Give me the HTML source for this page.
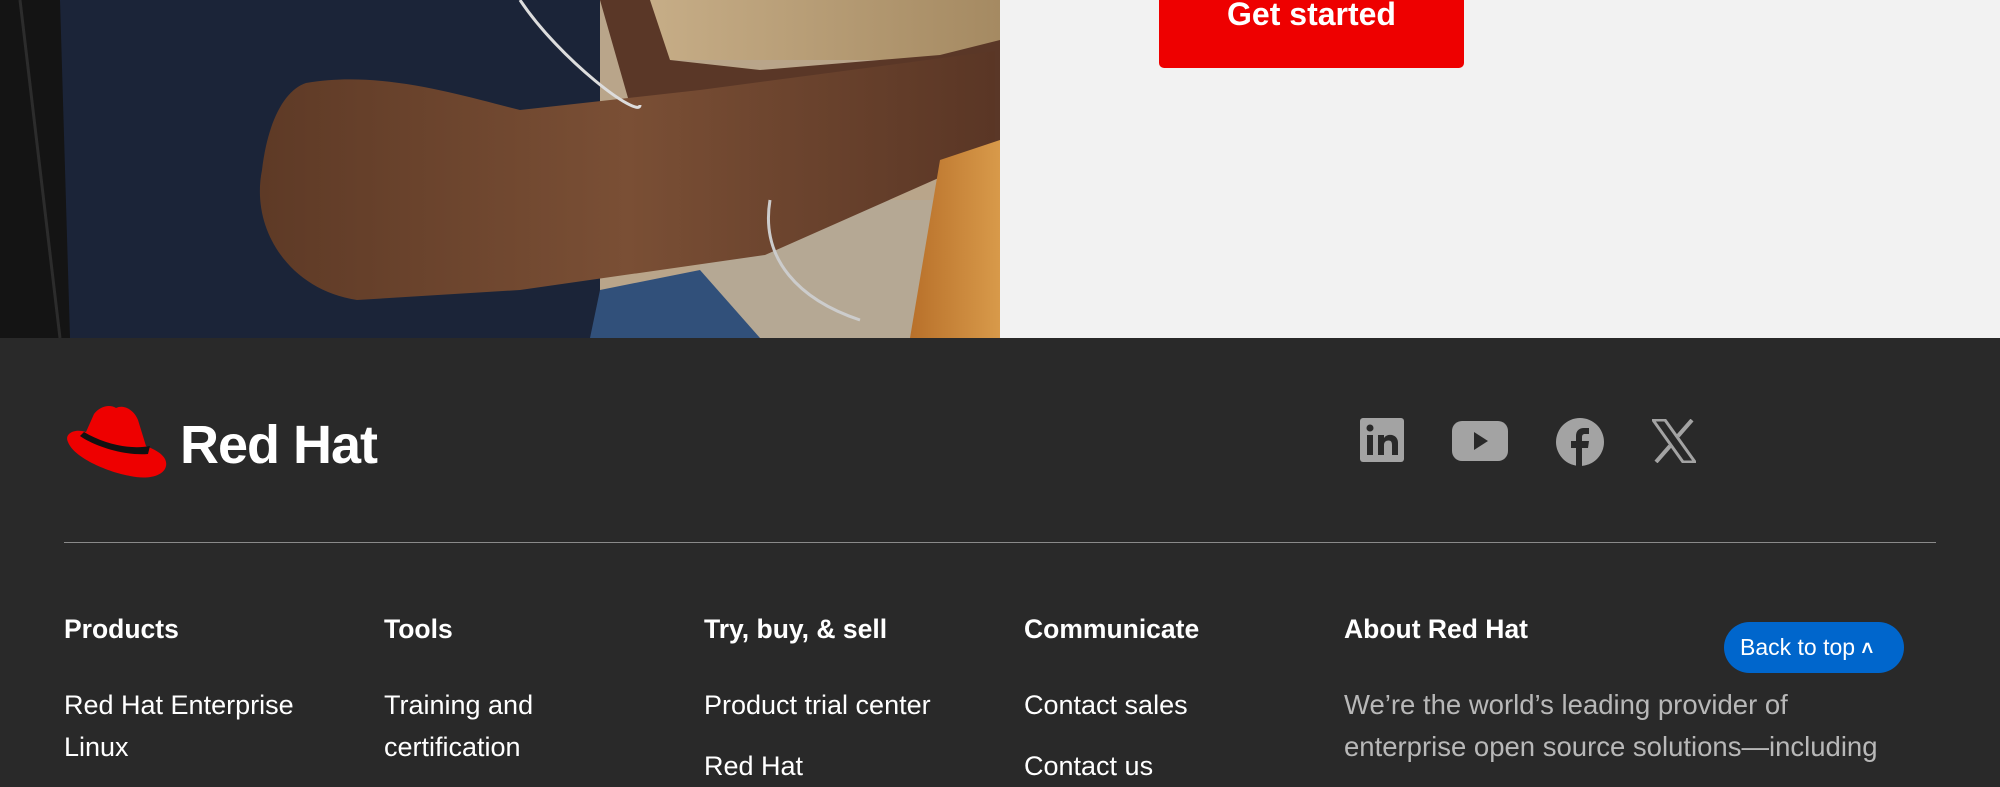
<!DOCTYPE html>
<html><head><meta charset="utf-8"><style>
*{margin:0;padding:0;box-sizing:border-box}
body{width:2000px;height:770px;overflow:hidden;background:#292929;font-family:"Liberation Sans",sans-serif;position:relative}
.top{position:absolute;left:0;top:0;width:2000px;height:338px;background:#f2f2f2}
.btn{position:absolute;left:1159px;top:-10px;width:305px;height:78px;background:#ee0000;border-radius:5px;color:#fff;font-weight:bold;font-size:32px;text-align:center;line-height:48px}
.col{position:absolute;top:612px;color:#fff}
.col h4{font-size:26.5px;font-weight:bold;line-height:34px;margin-bottom:38px}
.col p{font-size:27px;line-height:42px;color:#fff}
.about p{color:#b8b8b8;font-size:27.5px}
.btt{position:absolute;left:1724px;top:622px;width:180px;height:51px;background:#0066cc;border-radius:26px;color:#fff;font-size:23px;line-height:51px;padding-left:16px}
</style></head><body>
<div class="top">
<svg width="1000" height="338" style="position:absolute;left:0;top:0" viewBox="0 0 1000 338">
<defs>
<linearGradient id="bg" x1="0" x2="1"><stop offset="0" stop-color="#c9b08a"/><stop offset="1" stop-color="#a58a62"/></linearGradient>
<linearGradient id="arm" x1="0" y1="0" x2="1" y2="0"><stop offset="0" stop-color="#5e3a26"/><stop offset=".5" stop-color="#7a4f35"/><stop offset="1" stop-color="#5a3625"/></linearGradient>
<linearGradient id="wood" x1="0" x2="1"><stop offset="0" stop-color="#b8702a"/><stop offset="1" stop-color="#d89a4a"/></linearGradient>
</defs>
<rect width="1000" height="338" fill="#1b2438"/>
<rect x="600" y="0" width="400" height="338" fill="#b9a58a"/>
<rect x="620" y="0" width="380" height="60" fill="url(#bg)"/>
<rect x="700" y="200" width="240" height="138" fill="#b5a894"/>
<path d="M0 0H60L70 338H0Z" fill="#141414"/>
<path d="M20 0L60 338" stroke="#2c2c2c" stroke-width="3"/>
<path d="M600 0H650L670 60L760 70L940 55L1000 40V200L960 180L800 160L700 160L640 140Z" fill="#5a3727"/>
<path d="M306 83C380 70 460 95 520 110L700 90L995 51V153L765 255L520 290L357 300C290 290 250 230 262 170C268 120 285 90 306 83Z" fill="url(#arm)"/>
<path d="M600 290L700 270L760 338H590Z" fill="#31507a"/>
<path d="M940 160L1000 140V338H910Z" fill="url(#wood)"/>
<path d="M520 0C560 60 640 120 640 105" stroke="#ddd" stroke-width="3" fill="none"/>
<path d="M770 200C760 260 800 300 860 320" stroke="#ccc" stroke-width="3" fill="none"/>
</svg>
<div class="btn">Get started</div>
</div>
<svg style="position:absolute;left:64px;top:402px" width="104" height="78" viewBox="0 0 104 78">
<path d="M30 12C36 4 46 2 52 6C60 2 70 8 74 18L82 44C92 48 104 54 102 64C100 74 84 78 66 74C44 70 10 56 4 40C0 32 10 26 22 30Z" fill="#ee0000"/>
<path d="M16 34C30 44 60 54 84 52L86 44C66 48 40 42 20 30Z" fill="#111"/>
</svg>
<div style="position:absolute;left:180px;top:414px;font-size:54px;font-weight:bold;color:#fff;letter-spacing:-1px">Red Hat</div>
<svg style="position:absolute;left:1360px;top:418px" width="46" height="46" viewBox="0 0 46 46"><rect width="44" height="44" rx="3" fill="#a3a3a3"/><rect x="7" y="17" width="6" height="20" fill="#292929"/><circle cx="10" cy="10" r="3.5" fill="#292929"/><path d="M18 17H24V20C26 17 29 16.5 32 17C36 18 38 21 38 25V37H32V27C32 24 31 22.5 28.5 22.5C26 22.5 24 24 24 27V37H18Z" fill="#292929"/></svg>
<svg style="position:absolute;left:1452px;top:421px" width="56" height="40" viewBox="0 0 56 40"><rect width="56" height="40" rx="10" fill="#a3a3a3"/><path d="M22 11L36 20L22 29Z" fill="#292929"/></svg>
<svg style="position:absolute;left:1556px;top:418px" width="48" height="48" viewBox="0 0 48 48"><circle cx="24" cy="24" r="24" fill="#a3a3a3"/><path d="M26 48V30H32L33 23H26V19C26 17 27 16 29 16H33V10H28C23 10 20 13 20 18V23H15V30H20V48Z" fill="#292929"/></svg>
<svg style="position:absolute;left:1652px;top:419px" width="44" height="44" viewBox="0 0 44 44"><path d="M1 1H13L43 43H31Z" fill="none" stroke="#a3a3a3" stroke-width="3"/><path d="M40 1L26 17M4 43L18 27" stroke="#a3a3a3" stroke-width="4"/></svg>
<div style="position:absolute;left:64px;top:542px;width:1872px;height:1px;background:#8a8a8a"></div>
<div class="col" style="left:64px"><h4>Products</h4><p>Red Hat Enterprise<br>Linux</p></div>
<div class="col" style="left:384px"><h4>Tools</h4><p>Training and<br>certification</p></div>
<div class="col" style="left:704px"><h4>Try, buy, &amp; sell</h4><p>Product trial center</p><p style="margin-top:19px">Red Hat</p></div>
<div class="col" style="left:1024px"><h4>Communicate</h4><p>Contact sales</p><p style="margin-top:19px">Contact us</p></div>
<div class="col about" style="left:1344px"><h4>About Red Hat</h4><p>We’re the world’s leading provider of<br>enterprise open source solutions—including</p></div>
<div class="btt">Back to top <span style="font-weight:bold;font-size:20px">&#x2C4;</span></div>
</body></html>
